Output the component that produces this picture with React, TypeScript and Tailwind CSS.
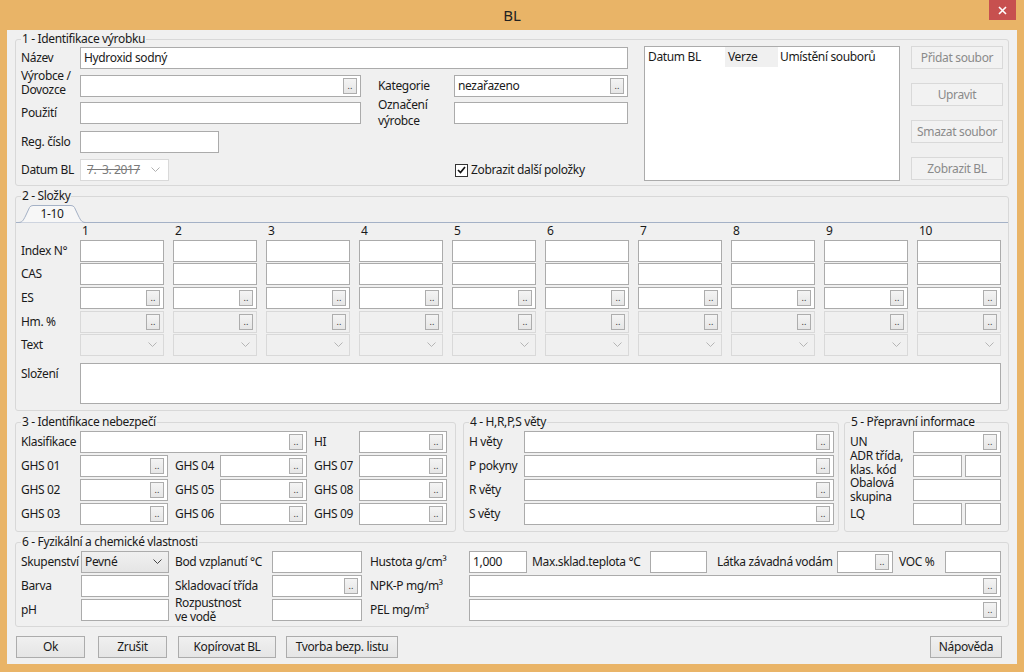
import React from "react";

/** Tlačítko ".." uvnitř textového pole */
function Dots() {
  return (
    <span className="ml-auto mr-[3px] flex h-[16px] w-[14px] shrink-0 items-end justify-center border border-[#adadad] bg-gradient-to-b from-[#f4f4f4] to-[#e6e6e6] pb-[3px] text-[9px] leading-none tracking-normal text-[#333]">
      ..
    </span>
  );
}

/** Textové pole (volitelně s tlačítkem a v zakázaném stavu) */
function Box({
  w,
  dots,
  disabled,
  value,
  h = "h-[22px]",
}: {
  w: string;
  dots?: boolean;
  disabled?: boolean;
  value?: string;
  h?: string;
}) {
  return (
    <div
      className={`${w} ${h} flex shrink-0 items-center border ${
        disabled ? "border-[#d9d9d9] bg-[#f0f0f0]" : "border-[#ababab] bg-white"
      }`}
    >
      {value && <span className="pl-[3px] leading-none">{value}</span>}
      {dots && <Dots />}
    </div>
  );
}

function Chevron({ color = "#a8a8a8" }: { color?: string }) {
  return (
    <svg width="9" height="6" viewBox="0 0 9 6" className="shrink-0">
      <path d="M0.5 0.5 L4.5 4.5 L8.5 0.5" fill="none" stroke={color} strokeWidth="1" />
    </svg>
  );
}

/** Zakázané rozbalovací pole */
function DisabledCombo({ w }: { w: string }) {
  return (
    <div className={`${w} flex h-[22px] shrink-0 items-center justify-end border border-[#d9d9d9] bg-[#f0f0f0] pr-[6px]`}>
      <Chevron color="#b5b5b5" />
    </div>
  );
}

function Label({ w, children, className = "" }: { w: string; children: React.ReactNode; className?: string }) {
  return <div className={`${w} shrink-0 whitespace-pre leading-[14px] ${className}`}>{children}</div>;
}

function Btn({
  w,
  children,
  disabled,
  className = "",
}: {
  w: string;
  children: React.ReactNode;
  disabled?: boolean;
  className?: string;
}) {
  return (
    <div
      className={`${w} flex h-[22px] shrink-0 items-center justify-center border ${
        disabled
          ? "border-[#d9d9d9] bg-[#f2f2f2] text-[#8a8a8a]"
          : "border-[#acacac] bg-gradient-to-b from-[#f0f0f0] to-[#e5e5e5] text-[#1a1a1a]"
      } ${className}`}
    >
      {children}
    </div>
  );
}

function Group({
  title,
  className = "",
  children,
}: {
  title: string;
  className?: string;
  children: React.ReactNode;
}) {
  return (
    <fieldset className={`min-w-0 rounded-[3px] border border-[#d8d8d8] ${className}`}>
      <legend className="ml-[5px] px-[1px] leading-[16px]">{title}</legend>
      {children}
    </fieldset>
  );
}

const cols = ["1", "2", "3", "4", "5", "6", "7", "8", "9", "10"];

export default function App() {
  return (
    <div className="flex h-[672px] w-[1024px] flex-col overflow-hidden bg-[#e9b467] font-['Noto_Sans',sans-serif] text-[12px] tracking-[-0.35px] text-[#1a1a1a]">
      {/* titulek okna */}
      <div className="flex h-[30px] shrink-0">
        <div className="w-[35px]" />
        <div className="flex-1 text-center text-[15px] leading-[30px] tracking-normal text-[#222]">BL</div>
        <div className="flex w-[35px] justify-end">
          <div className="mr-[8px] flex h-[20px] w-[27px] items-center justify-center bg-[#c7504f]">
            <svg width="9" height="9" viewBox="0 0 9 9">
              <path d="M1 1 L8 8 M8 1 L1 8" stroke="white" strokeWidth="1.6" />
            </svg>
          </div>
        </div>
      </div>

      {/* klientská oblast */}
      <div className="mx-[7px] flex h-[634px] flex-col bg-[#f0f0f0] px-[8px] pt-[1px]">
        {/* 1 - Identifikace výrobku */}
        <Group title="1 - Identifikace výrobku">
          <div className="flex h-[138px]">
            <div className="flex w-[612px] flex-col pl-[5px]">
              <div className="flex h-[22px] items-center">
                <Label w="w-[59px]">Název</Label>
                <Box w="w-[548px]" value="Hydroxid sodný" />
              </div>
              <div className="mt-[6px] flex h-[22px] items-center">
                <Label w="w-[59px]" className="mt-[-6px]">{"Výrobce /\nDovozce"}</Label>
                <Box w="w-[281px]" dots />
                <Label w="w-[76px]" className="ml-[17px]">Kategorie</Label>
                <Box w="w-[174px]" dots value="nezařazeno" />
              </div>
              <div className="mt-[5px] flex h-[22px] items-center">
                <Label w="w-[59px]">Použití</Label>
                <Box w="w-[281px]" />
                <Label w="w-[76px]" className="ml-[17px] leading-[16px]">{"Označení\nvýrobce"}</Label>
                <Box w="w-[174px]" />
              </div>
              <div className="mt-[7px] flex h-[22px] items-center">
                <Label w="w-[59px]">Reg. číslo</Label>
                <Box w="w-[139px]" />
              </div>
              <div className="mt-[6px] flex h-[22px] items-center">
                <Label w="w-[59px]">Datum BL</Label>
                <div className="flex h-[22px] w-[89px] shrink-0 items-center border border-[#d9d9d9] bg-white pl-[6px] pr-[8px]">
                  <span className="leading-none text-[#7a7a7a] line-through">7. &nbsp;3. 2017</span>
                  <span className="ml-auto">
                    <Chevron color="#b0b0b0" />
                  </span>
                </div>
                <div className="ml-[286px] flex items-center gap-[3px]">
                  <div className="flex h-[13px] w-[13px] items-center justify-center border border-[#333] bg-white">
                    <svg width="9" height="8" viewBox="0 0 9 8">
                      <path d="M1 4 L3.5 6.5 L8 1" fill="none" stroke="#111" strokeWidth="1.7" />
                    </svg>
                  </div>
                  <span>Zobrazit další položky</span>
                </div>
              </div>
            </div>

            {/* seznam souborů */}
            <div className="ml-[16px] mt-[-1px] h-[135px] w-[256px] shrink-0 border border-[#ababab] bg-white">
              <div className="flex h-[20px] items-center">
                <div className="w-[80px] pl-[3px]">Datum BL</div>
                <div className="flex h-full w-[53px] items-center bg-[#f0f0f0] pl-[3px]">Verze</div>
                <div className="pl-[2px]">Umístění souborů</div>
              </div>
            </div>

            <div className="ml-[11px] flex w-[92px] shrink-0 flex-col gap-[14px]">
              <Btn w="w-[92px]" disabled className="mt-[-1px] h-[23px]">Přidat soubor</Btn>
              <Btn w="w-[92px]" disabled className="h-[23px]">Upravit</Btn>
              <Btn w="w-[92px]" disabled className="h-[23px]">Smazat soubor</Btn>
              <Btn w="w-[92px]" disabled className="h-[23px]">Zobrazit BL</Btn>
            </div>
          </div>
        </Group>

        {/* 2 - Složky */}
        <Group title="2 - Složky" className="mt-[2px]">
          <div className="flex h-[19px] border-b border-[#a4b1c6]">
            <div className="relative ml-[2px] flex h-[19px] w-[68px] items-end justify-center pb-[1px]">
              <svg width="68" height="19" viewBox="0 0 68 19" className="absolute inset-0">
                <path
                  d="M0 18.5 C4 18.5 5 17 7.5 12 L11.5 3.5 Q12.5 1.5 15 1.5 L53 1.5 Q55.5 1.5 56.5 3.5 L60.5 12 C63 17 64 18.5 68 18.5"
                  fill="#f7f7f7"
                  stroke="#a4b1c6"
                  strokeWidth="1"
                />
              </svg>
              <span className="relative leading-[16px]">1-10</span>
            </div>
          </div>
          <div className="flex flex-col pl-[5px]">
            <div className="flex h-[17px]">
              <div className="w-[59px] shrink-0" />
              <div className="grid grid-cols-[repeat(10,84px)] gap-x-[9px]">
                {cols.map((c) => (
                  <div key={c} className="pl-[2px] leading-[15px]">
                    {c}
                  </div>
                ))}
              </div>
            </div>
            {[
              { label: "Index N°", mt: "", kind: "text" },
              { label: "CAS", mt: "mt-[1px]", kind: "text" },
              { label: "ES", mt: "mt-[2px]", kind: "dots" },
              { label: "Hm. %", mt: "mt-[2px]", kind: "disabled" },
              { label: "Text", mt: "mt-[1px]", kind: "combo" },
            ].map((row) => (
              <div key={row.label} className={`flex h-[22px] items-center ${row.mt}`}>
                <Label w="w-[59px]">{row.label}</Label>
                <div className="grid grid-cols-[repeat(10,84px)] gap-x-[9px]">
                  {cols.map((c) =>
                    row.kind === "combo" ? (
                      <DisabledCombo key={c} w="w-[84px]" />
                    ) : (
                      <Box
                        key={c}
                        w="w-[84px]"
                        dots={row.kind !== "text"}
                        disabled={row.kind === "disabled"}
                      />
                    )
                  )}
                </div>
              </div>
            ))}
            <div className="mt-[7px] flex pb-[6px]">
              <Label w="w-[59px]" className="pt-[4px]">Složení</Label>
              <Box w="w-[921px]" h="h-[41px]" />
            </div>
          </div>
        </Group>

        {/* 3, 4, 5 */}
        <div className="mt-[3px] flex">
          <Group title="3 - Identifikace nebezpečí" className="w-[441px] shrink-0">
            <div className="flex flex-col gap-[2px] pb-[6px] pl-[5px] pt-[1px]">
              <div className="flex h-[22px] items-center">
                <Label w="w-[59px]">Klasifikace</Label>
                <Box w="w-[227px]" dots />
                <Label w="w-[45px]" className="ml-[7px]">HI</Label>
                <Box w="w-[88px]" dots />
              </div>
              {[
                ["GHS 01", "GHS 04", "GHS 07"],
                ["GHS 02", "GHS 05", "GHS 08"],
                ["GHS 03", "GHS 06", "GHS 09"],
              ].map((r) => (
                <div key={r[0]} className="flex h-[22px] items-center">
                  <Label w="w-[59px]">{r[0]}</Label>
                  <Box w="w-[88px]" dots />
                  <Label w="w-[45px]" className="ml-[7px]">{r[1]}</Label>
                  <Box w="w-[87px]" dots />
                  <Label w="w-[45px]" className="ml-[7px]">{r[2]}</Label>
                  <Box w="w-[88px]" dots />
                </div>
              ))}
            </div>
          </Group>

          <Group title="4 - H,R,P,S věty" className="ml-[7px] w-[376px] shrink-0">
            <div className="flex flex-col gap-[2px] pb-[6px] pl-[5px] pt-[1px]">
              {["H věty", "P pokyny", "R věty", "S věty"].map((l) => (
                <div key={l} className="flex h-[22px] items-center">
                  <Label w="w-[55px]">{l}</Label>
                  <Box w="w-[310px]" dots />
                </div>
              ))}
            </div>
          </Group>

          <Group title="5 - Přepravní informace" className="ml-[5px] flex-1">
            <div className="flex flex-col gap-[2px] pb-[6px] pl-[5px] pt-[1px]">
              <div className="flex h-[22px] items-center">
                <Label w="w-[63px]">UN</Label>
                <Box w="w-[88px]" dots />
              </div>
              <div className="flex h-[22px] items-center">
                <Label w="w-[63px]" className="mt-[-6px] leading-[13px]">{"ADR třída,\nklas. kód"}</Label>
                <Box w="w-[49px]" />
                <div className="ml-[3px]">
                  <Box w="w-[36px]" />
                </div>
              </div>
              <div className="flex h-[22px] items-center">
                <Label w="w-[63px]" className="leading-[13px]">{"Obalová\nskupina"}</Label>
                <Box w="w-[88px]" />
              </div>
              <div className="flex h-[22px] items-center">
                <Label w="w-[63px]">LQ</Label>
                <Box w="w-[49px]" />
                <div className="ml-[3px]">
                  <Box w="w-[36px]" />
                </div>
              </div>
            </div>
          </Group>
        </div>

        {/* 6 - Fyzikální a chemické vlastnosti */}
        <Group title="6 - Fyzikální a chemické vlastnosti" className="mt-[2px]">
          <div className="flex flex-col gap-[2px] pb-[5px] pl-[5px] pt-[1px]">
            <div className="flex h-[22px] items-center">
              <Label w="w-[60px]">Skupenství</Label>
              <div className="flex h-[22px] w-[88px] shrink-0 items-center border border-[#acacac] bg-gradient-to-b from-[#f0f0f0] to-[#e5e5e5] pl-[3px] pr-[6px]">
                <span className="leading-none">Pevné</span>
                <span className="ml-auto">
                  <Chevron color="#444" />
                </span>
              </div>
              <Label w="w-[97px]" className="ml-[6px]">Bod vzplanutí °C</Label>
              <Box w="w-[90px]" />
              <Label w="w-[99px]" className="ml-[8px]">Hustota g/cm³</Label>
              <Box w="w-[58px]" value="1,000" />
              <Label w="w-[118px]" className="ml-[5px]">Max.sklad.teplota °C</Label>
              <Box w="w-[57px]" />
              <Label w="w-[120px]" className="ml-[10px]">Látka závadná vodám</Label>
              <Box w="w-[56px]" dots />
              <Label w="w-[46px]" className="ml-[6px]">VOC %</Label>
              <Box w="w-[56px]" />
            </div>
            <div className="flex h-[22px] items-center">
              <Label w="w-[60px]">Barva</Label>
              <Box w="w-[88px]" />
              <Label w="w-[97px]" className="ml-[6px]">Skladovací třída</Label>
              <Box w="w-[90px]" dots />
              <Label w="w-[99px]" className="ml-[8px]">NPK-P mg/m³</Label>
              <Box w="w-[532px]" dots />
            </div>
            <div className="flex h-[22px] items-center">
              <Label w="w-[60px]">pH</Label>
              <Box w="w-[88px]" />
              <Label w="w-[97px]" className="ml-[6px]">{"Rozpustnost\nve vodě"}</Label>
              <Box w="w-[90px]" />
              <Label w="w-[99px]" className="ml-[8px]">PEL mg/m³</Label>
              <Box w="w-[532px]" dots />
            </div>
          </div>
        </Group>

        {/* tlačítka */}
        <div className="mt-[9px] flex">
          <Btn w="w-[69px]" className="ml-[1px]">Ok</Btn>
          <Btn w="w-[69px]" className="ml-[13px]">Zrušit</Btn>
          <Btn w="w-[98px]" className="ml-[11px]">Kopírovat BL</Btn>
          <Btn w="w-[112px]" className="ml-[10px]">Tvorba bezp. listu</Btn>
          <Btn w="w-[72px]" className="ml-auto mr-[7px]">Nápověda</Btn>
        </div>
      </div>
    </div>
  );
}
